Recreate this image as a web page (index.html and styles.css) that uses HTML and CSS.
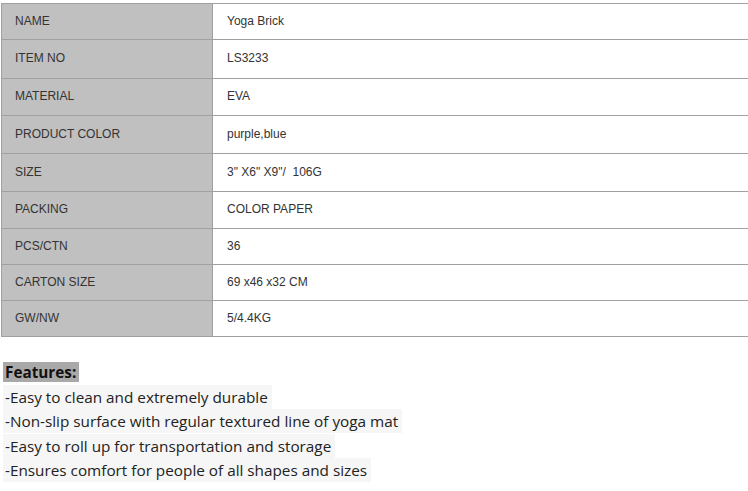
FILE: index.html
```html
<!DOCTYPE html>
<html>
<head>
<meta charset="utf-8">
<link rel="stylesheet" href="styles.css">
</head>
<body>
<table class="spec">
  <tr class="h36"><td class="label">NAME</td><td class="value">Yoga Brick</td></tr>
  <tr class="h39"><td class="label">ITEM NO</td><td class="value">LS3233</td></tr>
  <tr class="h37"><td class="label">MATERIAL</td><td class="value">EVA</td></tr>
  <tr class="h38"><td class="label">PRODUCT COLOR</td><td class="value">purple,blue</td></tr>
  <tr class="h38"><td class="label">SIZE</td><td class="value">3" X6" X9"/&nbsp; 106G</td></tr>
  <tr class="h37"><td class="label">PACKING</td><td class="value">COLOR PAPER</td></tr>
  <tr class="h36"><td class="label">PCS/CTN</td><td class="value">36</td></tr>
  <tr class="h36"><td class="label">CARTON SIZE</td><td class="value">69 x46 x32 CM</td></tr>
  <tr class="h36"><td class="label">GW/NW</td><td class="value">5/4.4KG</td></tr>
</table>
<div class="features">
  <div class="line"><span class="head">Features:</span></div>
  <div class="line"><span class="item">-Easy to clean and extremely durable</span></div>
  <div class="line"><span class="item">-Non-slip surface with regular textured line of yoga mat</span></div>
  <div class="line"><span class="item">-Easy to roll up for transportation and storage</span></div>
  <div class="line"><span class="item">-Ensures comfort for people of all shapes and sizes</span></div>
</div>
</body>
</html>
```
FILE: styles.css
```css
html, body {
  margin: 0;
  padding: 0;
  background: #fff;
}
body {
  padding: 3px 0 0 1px;
  overflow: hidden;
}
.spec {
  border-collapse: collapse;
  width: 760px;
  font-family: "Liberation Sans", Arial, sans-serif;
  font-size: 12px;
  color: #333;
}
.spec td {
  border: 1px solid #a0a0a0;
  padding: 0 0 2px 0;
  vertical-align: middle;
}
.spec .label {
  width: 197px;
  background: #c0c0c0;
  padding-left: 13px;
}
.spec .value {
  padding-left: 14px;
  background: #fff;
}
.h36 { height: 36px; }
.h37 { height: 37px; }
.h38 { height: 38px; }
.h39 { height: 39px; }
.features {
  margin-top: 25px;
  padding-left: 2px;
  font-family: "Open Sans", "Noto Sans", sans-serif;
  font-size: 15.3px;
  color: #222;
}
.line {
  height: 24.5px;
  line-height: 20px;
}
.head {
  background: #a9a9a9;
  font-weight: bold;
  color: #111;
  padding: 0 3px 0 2px;
}
.item {
  background: #f6f6f6;
  padding: 2px 4px 2px 2px;
}
```
